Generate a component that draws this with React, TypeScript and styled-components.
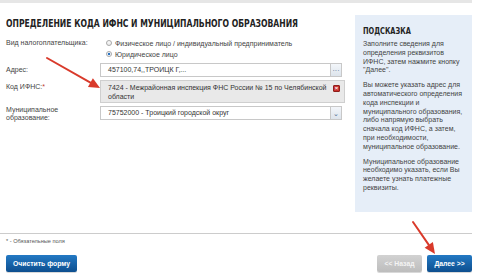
import React, { useState } from 'react';
import styled, { createGlobalStyle } from 'styled-components';

const GlobalStyle = createGlobalStyle`
  html, body {
    margin: 0;
    padding: 0;
    background: #ffffff;
  }
  body {
    font-family: 'Liberation Sans', Arial, sans-serif;
    color: #333333;
  }
`;

const Page = styled.div`
  position: relative;
  width: 480px;
  height: 279px;
  overflow: hidden;
  background: #ffffff;
`;

const TopRule = styled.div`
  height: 3px;
  width: 472px;
  background: #e6e6e6;
`;

const Content = styled.div`
  box-sizing: border-box;
  display: grid;
  grid-template-columns: 1fr 117px;
  column-gap: 10px;
  padding: 12px 8px 0 6px;
  height: 230px;
`;

const Main = styled.div`
  display: flex;
  flex-direction: column;
  min-width: 0;
`;

// the original heading face is a condensed DIN, so the bold sans is narrowed
const Title = styled.h1`
  margin: 0;
  height: 16px;
  line-height: 16px;
  font-family: 'DejaVu Sans', sans-serif;
  font-weight: bold;
  font-size: 10.5px;
  color: #222222;
  white-space: nowrap;
  transform: scaleX(0.73);
  transform-origin: left center;
`;

const Form = styled.div`
  display: grid;
  grid-template-columns: 94px 245px;
  row-gap: 3px;
  margin-top: 8px;
  font-size: 7px;
`;

const Label = styled.div<{ $pad?: number }>`
  padding-top: ${(p) => p.$pad ?? 3}px;
  line-height: 8px;
  color: #444444;
`;

const Req = styled.span`
  color: #c0392b;
`;

const Radios = styled.div`
  display: flex;
  flex-direction: column;
  gap: 3px;
  padding-left: 6px;
  padding-bottom: 2px;
`;

const RadioRow = styled.label`
  display: flex;
  align-items: center;
  gap: 3px;
  height: 8px;
  color: #444444;
`;

const RadioDot = styled.span<{ $checked?: boolean }>`
  width: 6px;
  height: 6px;
  box-sizing: border-box;
  border-radius: 50%;
  border: 1px solid #a8a8a8;
  background: ${(p) =>
    p.$checked ? 'radial-gradient(circle, #2a73c0 0 1.4px, #ffffff 1.6px)' : 'linear-gradient(#fdfdfd, #e8e8e8)'};
`;

const FieldRow = styled.div`
  display: flex;
`;

const TextBox = styled.div<{ $width: number }>`
  box-sizing: border-box;
  width: ${(p) => p.$width}px;
  height: 14px;
  border: 1px solid #c8c8c8;
  border-right: none;
  padding: 0 7px;
  line-height: 12px;
  color: #333333;
  background: #ffffff;
  white-space: nowrap;
  overflow: hidden;
`;

const SideButton = styled.div`
  box-sizing: border-box;
  width: 12px;
  height: 14px;
  border: 1px solid #c8c8c8;
  background: linear-gradient(#f3f6fa, #dde4ec);
  display: flex;
  align-items: center;
  justify-content: center;
  color: #4a6a90;
  font-size: 7px;
  line-height: 1;
`;

const GreyBox = styled.div`
  position: relative;
  box-sizing: border-box;
  width: 245px;
  height: 23px;
  border: 1px solid #cfcfcf;
  background: #e9e9e9;
  padding: 2px 14px 0 7px;
  line-height: 9px;
  color: #333333;
`;

const ClearIcon = styled.span`
  position: absolute;
  right: 4px;
  top: 4px;
  width: 7px;
  height: 7px;
  border-radius: 1px;
  background: #c9302c;
  border: 1px solid #8e1f1b;
  box-sizing: border-box;
  color: #ffffff;
  font-size: 6px;
  line-height: 5px;
  text-align: center;
  font-weight: bold;
`;

const Hint = styled.aside`
  background: #e6eef8;
  height: 197px;
  box-sizing: border-box;
  padding: 10px 8px 0 8px;
  font-size: 7px;
  line-height: 8.8px;
  color: #444444;
`;

const HintTitle = styled.div`
  font-family: 'DejaVu Sans', sans-serif;
  font-weight: bold;
  font-size: 8.5px;
  line-height: 12px;
  color: #222222;
  margin-bottom: 3px;
  transform: scaleX(0.78);
  transform-origin: left center;
`;

const HintPara = styled.p`
  margin: 0 0 6px 0;
`;

const Divider = styled.div`
  width: 472px;
  height: 1px;
  background: #cccccc;
`;

const Note = styled.div`
  padding: 4px 0 0 6px;
  font-size: 5.6px;
  color: #555555;
`;

const ButtonBar = styled.div`
  display: flex;
  justify-content: space-between;
  padding: 11px 8px 0 6px;
`;

const ButtonGroup = styled.div`
  display: flex;
  gap: 5px;
`;

const Button = styled.button<{ $variant?: 'primary' | 'muted'; $width: number }>`
  box-sizing: border-box;
  width: ${(p) => p.$width}px;
  height: 17px;
  padding: 0;
  border: none;
  border-radius: 2px;
  font-family: 'Liberation Sans', Arial, sans-serif;
  font-size: 6.8px;
  font-weight: bold;
  color: ${(p) => (p.$variant === 'muted' ? '#f4f4f4' : '#ffffff')};
  background: ${(p) =>
    p.$variant === 'muted' ? 'linear-gradient(#d2d2d2, #bdbdbd)' : 'linear-gradient(#2379c4, #0d4f8f)'};
  box-shadow: 0 1px 0 rgba(0, 0, 0, 0.15);
  cursor: pointer;
`;

const Annotations = styled.svg`
  position: absolute;
  left: 0;
  top: 0;
  pointer-events: none;
`;

const Arrow: React.FC<{ x1: number; y1: number; x2: number; y2: number }> = ({ x1, y1, x2, y2 }) => {
  const a = Math.atan2(y2 - y1, x2 - x1);
  const len = 11;
  const w = 5;
  const bx = x2 - Math.cos(a) * len;
  const by = y2 - Math.sin(a) * len;
  const px = -Math.sin(a) * w;
  const py = Math.cos(a) * w;
  return (
    <g>
      <line x1={x1} y1={y1} x2={bx} y2={by} stroke="#d93a2b" strokeWidth={2} strokeLinecap="round" />
      <polygon points={`${x2},${y2} ${bx + px},${by + py} ${bx - px},${by - py}`} fill="#d93a2b" />
    </g>
  );
};

const App: React.FC = () => {
  const [kind, setKind] = useState('ul');

  return (
    <>
      <GlobalStyle />
      <Page>
        <TopRule />
        <Content>
          <Main>
            <Title>ОПРЕДЕЛЕНИЕ КОДА ИФНС И МУНИЦИПАЛЬНОГО ОБРАЗОВАНИЯ</Title>
            <Form>
              <Label $pad={0}>Вид налогоплательщика:</Label>
              <Radios>
                <RadioRow onClick={() => setKind('fl')}>
                  <RadioDot $checked={kind === 'fl'} />
                  Физическое лицо / индивидуальный предприниматель
                </RadioRow>
                <RadioRow onClick={() => setKind('ul')}>
                  <RadioDot $checked={kind === 'ul'} />
                  Юридическое лицо
                </RadioRow>
              </Radios>

              <Label>Адрес:</Label>
              <FieldRow>
                <TextBox $width={230}>457100,74,,ТРОИЦК Г,...</TextBox>
                <SideButton>···</SideButton>
              </FieldRow>

              <Label>
                Код ИФНС:<Req>*</Req>
              </Label>
              <GreyBox>
                7424 - Межрайонная инспекция ФНС России № 15 по Челябинской области
                <ClearIcon>×</ClearIcon>
              </GreyBox>

              <Label $pad={0}>
                Муниципальное
                <br />
                образование:
              </Label>
              <FieldRow>
                <TextBox $width={230}>75752000 - Троицкий городской округ</TextBox>
                <SideButton>⌄</SideButton>
              </FieldRow>
            </Form>
          </Main>
          <Hint>
            <HintTitle>ПОДСКАЗКА</HintTitle>
            <HintPara>Заполните сведения для определения реквизитов ИФНС, затем нажмите кнопку "Далее".</HintPara>
            <HintPara>
              Вы можете указать адрес для автоматического определения кода инспекции и муниципального образования,
              либо напрямую выбрать сначала код ИФНС, а затем, при необходимости, муниципальное образование.
            </HintPara>
            <HintPara>Муниципальное образование необходимо указать, если Вы желаете узнать платежные реквизиты.</HintPara>
          </Hint>
        </Content>
        <Divider />
        <Note>* - Обязательные поля</Note>
        <ButtonBar>
          <Button $width={71}>Очистить форму</Button>
          <ButtonGroup>
            <Button $variant="muted" $width={45}>
              {'<< Назад'}
            </Button>
            <Button $width={45}>{'Далее >>'}</Button>
          </ButtonGroup>
        </ButtonBar>
        <Annotations width={480} height={279}>
          <Arrow x1={47} y1={58} x2={100} y2={88} />
          <Arrow x1={413} y1={222} x2={435} y2={254} />
        </Annotations>
      </Page>
    </>
  );
};

export default App;
